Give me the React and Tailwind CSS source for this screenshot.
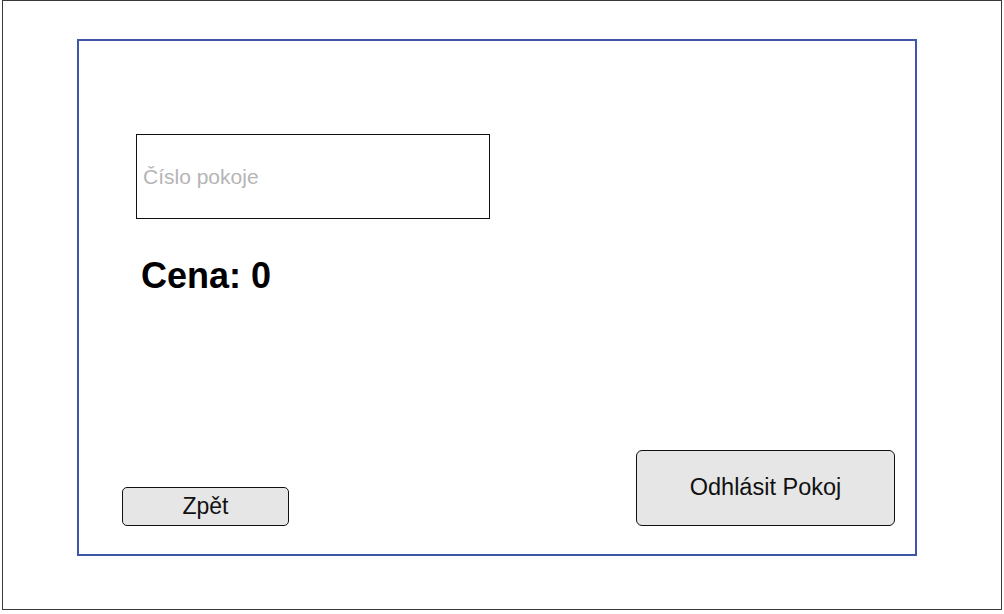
import React from 'react';

export default function App() {
  return (
    <div className="w-[1004px] h-[614px] bg-white pl-[2px] font-['Liberation_Sans',Arial,sans-serif]">
      <div className="w-[1000px] h-[610px] border border-[#3a3a3a] pt-[38px] pl-[74px]">
        <div className="w-[840px] h-[517px] border-2 border-[#3e56a8] flex flex-col pl-[57px] pr-[20px] pt-[93px] pb-[28px]">
          <input
            type="text"
            placeholder="Číslo pokoje"
            className="w-[354px] h-[85px] border border-[#111] px-[6px] text-[21px] text-black placeholder:text-[#b5b5b5] outline-none"
          />
          <div className="mt-[39px] pl-[5px] text-[36px] font-bold text-black leading-none">Cena: 0</div>
          <div className="flex-1" />
          <div className="flex items-end justify-between">
            <button className="-ml-[14px] w-[167px] h-[39px] rounded-[5px] border border-[#111] bg-[#e6e6e6] text-[23px] text-[#111] leading-none">
              Zpět
            </button>
            <button className="w-[259px] h-[76px] rounded-[6px] border border-[#111] bg-[#e6e6e6] text-[23.5px] text-[#111] leading-none">
              Odhlásit Pokoj
            </button>
          </div>
        </div>
      </div>
    </div>
  );
}
